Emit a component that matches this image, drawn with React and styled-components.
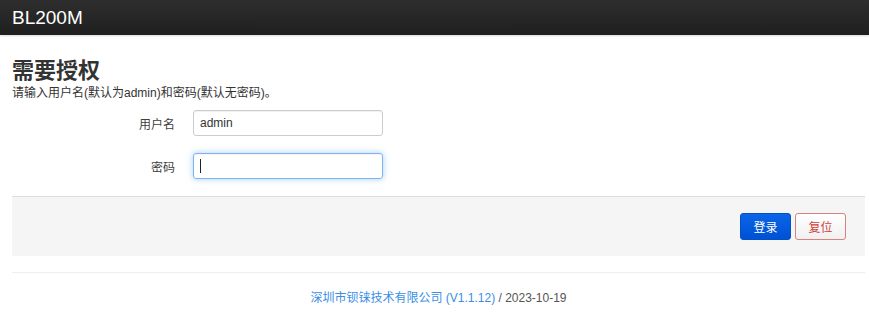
import React from "react";
import styled, { createGlobalStyle } from "styled-components";

const Global = createGlobalStyle`
  html, body { margin: 0; padding: 0; background: #fff; }
  body {
    font-family: "Liberation Sans", "Noto Sans CJK SC", sans-serif;
    font-size: 12px;
    color: #404040;
  }
`;

const Header = styled.header`
  height: 35px;
  background: linear-gradient(to bottom, #2e2e2e, #1f1f1f);
  display: flex;
  align-items: center;
  padding: 0 12px;
  box-shadow: 0 1px 2px rgba(0,0,0,0.15);
`;

const Brand = styled.div`
  color: #fff;
  font-size: 19px;
  line-height: 1;
  margin-top: -1px;
`;

const Main = styled.main`
  padding: 0 4px 0 12px;
`;

const Title = styled.h2`
  margin: 22px 0 0;
  font-size: 22px;
  line-height: 27px;
  font-weight: bold;
  color: #333;
`;

const Desc = styled.p`
  margin: 1px 0 0;
  font-size: 12px;
  line-height: 16px;
  color: #333;
`;

const Fields = styled.div`
  display: flex;
  flex-direction: column;
  gap: 17px;
  margin-top: 9px;
  padding-bottom: 17px;
`;

const Row = styled.div`
  display: grid;
  grid-template-columns: 163px 190px;
  column-gap: 18px;
  align-items: center;
`;

const Label = styled.label`
  text-align: right;
  font-size: 12px;
  color: #404040;
`;

const Input = styled.input`
  box-sizing: border-box;
  height: 26px;
  width: 190px;
  padding: 0 6px;
  font-family: inherit;
  font-size: 12px;
  color: #333;
  border: 1px solid ${(p) => (p.$focus ? "#7fb5ec" : "#ccc")};
  border-radius: 3px;
  outline: none;
  box-shadow: ${(p) =>
    p.$focus
      ? "inset 0 1px 1px rgba(0,0,0,.05), 0 0 6px rgba(82,168,236,.55)"
      : "inset 0 1px 1px rgba(0,0,0,.06)"};
`;

const Caret = styled.span`
  display: inline-block;
  width: 1px;
  height: 14px;
  background: #222;
`;

const FakeInput = styled(Input).attrs({ as: "div" })`
  display: flex;
  align-items: center;
`;

const Actions = styled.div`
  border-top: 1px solid #ddd;
  background: #f5f5f5;
  height: 59px;
  display: flex;
  align-items: center;
  justify-content: flex-end;
  gap: 4px;
  padding-right: 19px;
`;

const Button = styled.button`
  box-sizing: border-box;
  height: 27px;
  width: 51px;
  border-radius: 3px;
  font-family: inherit;
  font-size: 12px;
  cursor: pointer;
  border: 1px solid ${(p) => (p.$primary ? "#0050c8" : "#d98080")};
  color: ${(p) => (p.$primary ? "#fff" : "#d04040")};
  background: ${(p) =>
    p.$primary
      ? "linear-gradient(to bottom, #0a64e6, #0051d4)"
      : "linear-gradient(to bottom, #ffffff, #f0f0f0)"};
`;

const Footer = styled.footer`
  margin-top: 16px;
  border-top: 1px solid #eee;
  padding-top: 15px;
  text-align: center;
  font-size: 12px;
  color: #555;
`;

const Link = styled.a`
  color: #3a8ee6;
  text-decoration: none;
`;

export default function App() {
  return (
    <>
      <Global />
      <Header>
        <Brand>BL200M</Brand>
      </Header>
      <Main>
        <Title>需要授权</Title>
        <Desc>请输入用户名(默认为admin)和密码(默认无密码)。</Desc>
        <Fields>
          <Row>
            <Label>用户名</Label>
            <Input defaultValue="admin" />
          </Row>
          <Row>
            <Label>密码</Label>
            <FakeInput $focus>
              <Caret />
            </FakeInput>
          </Row>
        </Fields>
        <Actions>
          <Button $primary>登录</Button>
          <Button>复位</Button>
        </Actions>
        <Footer>
          <Link href="#">深圳市钡铼技术有限公司 (V1.1.12)</Link> / 2023-10-19
        </Footer>
      </Main>
    </>
  );
}
